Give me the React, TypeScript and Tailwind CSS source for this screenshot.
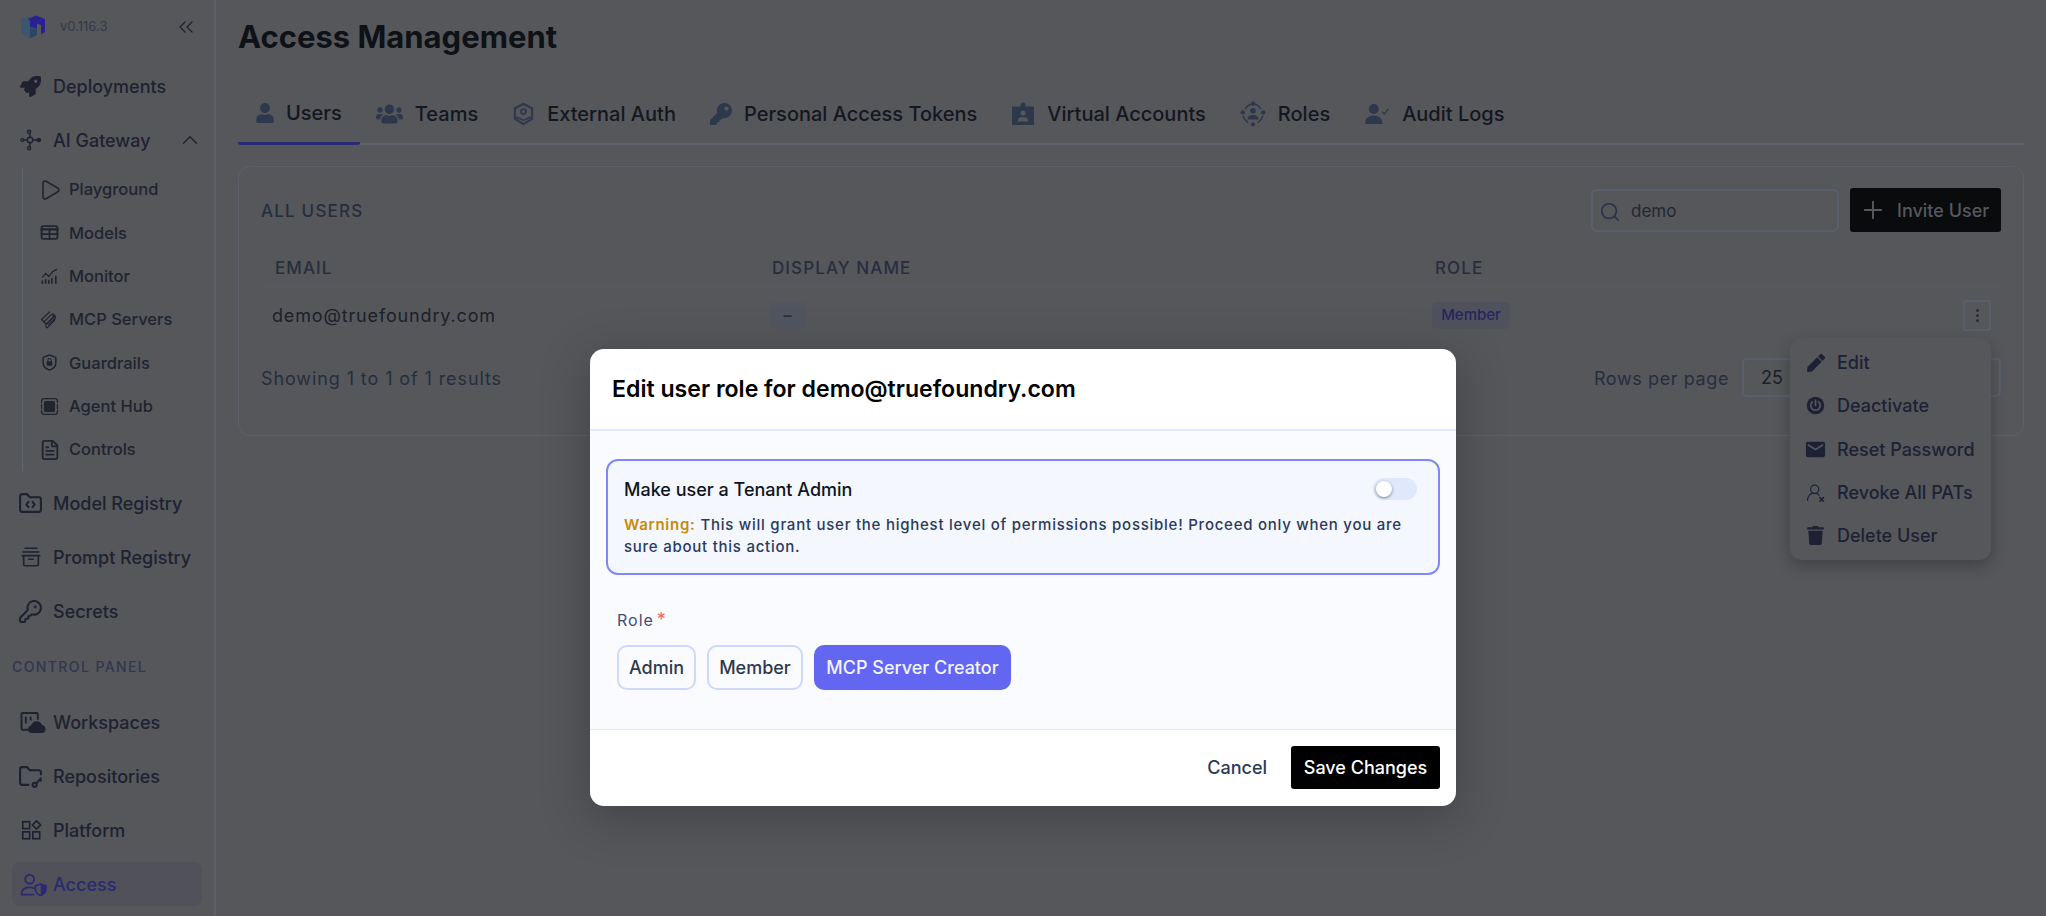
import React from 'react';
import {
  ChevronsLeft,
  ChevronUp,
  Play,
  FileText,
  FolderCode,
  FolderKey,
  KeyRound,
  Search,
  Plus,
} from 'lucide-react';
import { FaRocket, FaUser, FaUsers, FaKey, FaPen, FaTrash } from 'react-icons/fa';
import { MdEmail } from 'react-icons/md';

type IconProps = { className?: string };

const Svg = ({ className, children }: IconProps & { children: React.ReactNode }) => (
  <svg viewBox="0 0 24 24" fill="none" stroke="currentColor" strokeWidth="2" strokeLinecap="round" strokeLinejoin="round" className={className}>
    {children}
  </svg>
);

const Logo = () => (
  <svg viewBox="0 0 24 24" className="w-[24px] h-[24px]">
    <path d="M0 4.500 7 1.500 10 3v18l-1 2.500L0 18z" fill="#3c566f" />
    <path d="M9 12l7 2.500V20l-7 3.500z" fill="#2c4560" />
    <path d="M7 4l8-3.500L24 4v13l-4 2.500V10l-4-1.500V14L9 11.500V6z" fill="#2a2190" />
  </svg>
);

const GatewayIcon = ({ className }: IconProps) => (
  <Svg className={className}>
    <g strokeWidth="1.500">
      <circle cx="11" cy="12" r="3" />
      <circle cx="10" cy="3" r="1.700" />
      <circle cx="10" cy="21" r="1.700" />
      <circle cx="2.500" cy="12" r="1.500" />
      <path d="M4 12h4M14 12h5M10.500 5l.5 4M10.500 19l.5-4" />
    </g>
    <circle cx="20.500" cy="12" r="2.500" fill="currentColor" stroke="none" />
  </Svg>
);

const TableIcon = ({ className }: IconProps) => (
  <Svg className={className}>
    <rect x="2" y="4" width="20" height="16" rx="2" strokeWidth="2.400" />
    <path d="M2 8h20" strokeWidth="3" />
    <path d="M2 14h20M12 8v12" strokeWidth="2.200" />
  </Svg>
);

const MonitorIcon = ({ className }: IconProps) => (
  <Svg className={className}>
    <path d="M3 21v-4M7 21v-6M11 21v-5M15 21v-7M20 21V11" strokeWidth="2" strokeLinecap="butt" />
    <path d="M3 13l4-5 4 4 5-6 5-3" strokeWidth="1.500" />
  </Svg>
);

const McpIcon = ({ className }: IconProps) => (
  <Svg className={className}>
    <g strokeWidth="1.500">
      <path d="M2 12 12 2.500" />
      <path d="M5 15 14.500 5.500a2 2 0 0 1 3 3L8 18" />
      <path d="M8 18l9.500-9.500M11 18.500l8-8a2 2 0 0 0-3-3" />
      <path d="M2 12l6 6M7 20l2 2.500 9-9a2 2 0 0 0 0-3" />
    </g>
  </Svg>
);

const ShieldLockIcon = ({ className }: IconProps) => (
  <Svg className={className}>
    <path d="M12 2.500 4 5.500v7c0 4.500 3.500 7.500 8 9 4.500-1.500 8-4.500 8-9v-7z" strokeWidth="1.800" />
    <rect x="8.500" y="10.500" width="7" height="5.500" rx="1" fill="currentColor" stroke="none" />
    <path d="M10 10.500V9a2 2 0 0 1 4 0v1.500" strokeWidth="1.300" />
  </Svg>
);

const AgentIcon = ({ className }: IconProps) => (
  <Svg className={className}>
    <path d="M2 7V5a3 3 0 0 1 3-3h14a3 3 0 0 1 3 3v2M2 17v2a3 3 0 0 0 3 3h14a3 3 0 0 0 3-3v-2" strokeWidth="1.600" />
    <path d="M2 9.500v5M22 9.500v5" strokeWidth="1.600" />
    <rect x="5" y="5" width="14" height="14" rx="2" fill="currentColor" stroke="none" />
  </Svg>
);

const ArchiveIcon = ({ className }: IconProps) => (
  <Svg className={className}>
    <path d="M5.500 2.500h13M3.500 6.500h17" strokeWidth="1.800" />
    <path d="M2.500 10.500h19M4 10.500V20a1.500 1.500 0 0 0 1.500 1.500h13A1.500 1.500 0 0 0 20 20v-9.500M9.500 14.500h5" strokeWidth="1.800" />
  </Svg>
);

const WorkspaceIcon = ({ className }: IconProps) => (
  <svg viewBox="0 0 28 24" fill="none" className={className}>
    <path d="M11 19.500H2.500a1 1 0 0 1-1-1V3a1 1 0 0 1 1-1h15a1 1 0 0 1 1 1v6" stroke="currentColor" strokeWidth="2" />
    <path d="M6 6v7M11 6v4" stroke="currentColor" strokeWidth="2" />
    <path d="M12 23a4 4 0 0 1-.5-7.900 6 6 0 0 1 11.300-.6A4.300 4.300 0 0 1 23 23z" fill="currentColor" />
  </svg>
);

const PlatformIcon = ({ className }: IconProps) => (
  <Svg className={className}>
    <g strokeWidth="1.800" strokeLinejoin="miter">
      <rect x="3" y="3" width="7.500" height="7.500" />
      <rect x="3" y="14" width="7.500" height="7.500" />
      <rect x="14" y="14" width="7.500" height="7.500" />
      <path d="M18 2l4.500 4.500L18 11l-4.500-4.500z" />
    </g>
  </Svg>
);

const AccessIcon = ({ className }: IconProps) => (
  <svg viewBox="0 0 28 24" fill="none" className={className}>
    <circle cx="10" cy="6.500" r="4.700" stroke="currentColor" strokeWidth="1.900" />
    <path d="M1.500 22.500c0-5 3.500-7.500 8.500-7.500 2 0 3.500.4 5 1.300M1.500 22.500H14" stroke="currentColor" strokeWidth="1.900" strokeLinecap="round" />
    <path d="M21.500 11.500l5.500 2v3.500c0 3-2.500 5.500-5.500 6.500-3-1-5.500-3.500-5.500-6.500v-3.500z" stroke="currentColor" strokeWidth="1.700" />
    <path d="M21.500 11.500l5.500 2v3.500c0 3-2.500 5.500-5.500 6.500z" fill="currentColor" />
  </svg>
);

const HexPinIcon = ({ className }: IconProps) => (
  <Svg className={className}>
    <path d="M12 1.500 21 6v11l-9 5.500L3 17V6z" strokeWidth="2.200" />
    <circle cx="12" cy="9.500" r="2.600" strokeWidth="1.900" />
    <path d="M5 15.500l7 3 7-3" strokeWidth="1.900" />
  </Svg>
);

const BadgeIcon = ({ className }: IconProps) => (
  <svg viewBox="0 0 24 24" className={className}>
    <path fillRule="evenodd" clipRule="evenodd" fill="currentColor" d="M9.500 4.500V3a2.500 2.500 0 0 1 5 0v1.500H23V23H1V4.500zM12 8.500a2.500 2.500 0 1 0 0 5 2.500 2.500 0 0 0 0-5zM7 19.500h10v-1.500c0-2-2-3-5-3s-5 1-5 3z" />
  </svg>
);

const RolesIcon = ({ className }: IconProps) => (
  <Svg className={className}>
    <path d="M5 7a9.500 9.500 0 0 1 5-4M14 3a9.500 9.500 0 0 1 5 4M21 14a9.500 9.500 0 0 1-4 5.500M7 19.500A9.500 9.500 0 0 1 3 14" strokeWidth="1.400" />
    <g fill="currentColor" stroke="none">
      <circle cx="12" cy="2.500" r="2" />
      <circle cx="21.500" cy="10.500" r="2" />
      <circle cx="2.500" cy="10.500" r="2" />
      <circle cx="12" cy="21.500" r="2" />
      <circle cx="12" cy="9" r="2.600" />
      <path d="M7 17c0-3 2-4 5-4s5 1 5 4z" />
    </g>
  </Svg>
);

const UserCheckIcon = ({ className }: IconProps) => (
  <svg viewBox="0 0 28 24" fill="none" className={className}>
    <circle cx="10.500" cy="6.500" r="5.500" fill="currentColor" />
    <path d="M1 23c0-6.500 4-9.500 9.500-9.500S20 16.500 20 23z" fill="currentColor" />
    <path d="M19.500 9.500l2.500 2.500 4.500-5.500" stroke="currentColor" strokeWidth="1.300" />
  </svg>
);

const PowerIcon = ({ className }: IconProps) => (
  <svg viewBox="0 0 24 24" className={className}>
    <circle cx="12" cy="12" r="11" fill="currentColor" />
    <path d="M8 7.500a6 6 0 1 0 8 0M12 5.500v6.500" fill="none" stroke="#54565a" strokeWidth="2.200" strokeLinecap="round" />
  </svg>
);

const UserXIcon = ({ className }: IconProps) => (
  <Svg className={className}>
    <circle cx="11" cy="8" r="5.200" strokeWidth="1.500" />
    <path d="M2 22c0-5 3-8.500 6-9M14 13.500c1 .4 2 1 2.500 2" strokeWidth="1.500" />
    <path d="M17.500 18.500l4.500 4.500M22 18.500 17.500 23" strokeWidth="2" />
  </Svg>
);

const gatewayItems = [
  { label: 'Playground', icon: Play, box: 'w-[24px] h-[24px] stroke-[1.600px]' },
  { label: 'Models', icon: TableIcon, box: 'w-[19px] h-[19px]' },
  { label: 'Monitor', icon: MonitorIcon, box: 'w-[19px] h-[19px]' },
  { label: 'MCP Servers', icon: McpIcon, box: 'w-[19px] h-[19px]' },
  { label: 'Guardrails', icon: ShieldLockIcon, box: 'w-[19px] h-[19px]' },
  { label: 'Agent Hub', icon: AgentIcon, box: 'w-[19px] h-[19px]' },
  { label: 'Controls', icon: FileText, box: 'w-[22px] h-[22px]' },
];

const tabs = [
  { label: 'Users', icon: FaUser, box: 'w-[18px] h-[20px]' },
  { label: 'Teams', icon: FaUsers, box: 'w-[27px] h-[22px]' },
  { label: 'External Auth', icon: HexPinIcon, box: 'w-[23px] h-[26px]' },
  { label: 'Personal Access Tokens', icon: FaKey, box: 'w-[22px] h-[22px]' },
  { label: 'Virtual Accounts', icon: BadgeIcon, box: 'w-[24px] h-[24px]' },
  { label: 'Roles', icon: RolesIcon, box: 'w-[26px] h-[26px]' },
  { label: 'Audit Logs', icon: UserCheckIcon, box: 'w-[26px] h-[22px]' },
];

const menuItems = [
  { label: 'Edit', icon: FaPen, box: 'w-[18px] h-[18px]' },
  { label: 'Deactivate', icon: PowerIcon, box: 'w-[19px] h-[19px]' },
  { label: 'Reset Password', icon: MdEmail, box: 'w-[23px] h-[23px] -mx-[2px]' },
  { label: 'Revoke All PATs', icon: UserXIcon, box: 'w-[19px] h-[19px]' },
  { label: 'Delete User', icon: FaTrash, box: 'w-[17px] h-[19px]' },
];

const lucideNavIcon = 'w-[25px] h-[25px] -ml-[2px] -mr-[1px]';

const NavRow = ({ label, icon: Icon, active, iconClass = 'w-[22px] h-[22px]' }: { label: string; icon: React.ElementType; active?: boolean; iconClass?: string }) => (
  <div className="h-[54px] px-[12px] py-[5px]">
    <div className={`h-[44px] px-[8px] flex items-center rounded-[8px] text-[18px] font-medium ${active ? 'bg-[#505159] text-[#2a2a72]' : 'text-[#1e2230]'}`}>
      <span className="w-[22px] mr-[11px] flex justify-start shrink-0">
        <Icon className={`${iconClass} shrink-0`} />
      </span>
      {label}
    </div>
  </div>
);

const Sidebar = () => (
  <aside className="w-[216px] shrink-0 h-full border-r-2 border-[#5b6069]">
    <div className="h-[54px] pl-[21px] pr-[16px] flex items-center">
      <Logo />
      <span className="ml-[15px] text-[13px] text-[#343a48]">v0.116.3</span>
      <ChevronsLeft className="ml-auto w-[24px] h-[24px] text-[#20242f]" strokeWidth={1.400} />
    </div>
    <div className="mt-[5px]">
      <NavRow label="Deployments" icon={FaRocket} iconClass="w-[21px] h-[21px]" />
    </div>
    <div className="relative">
      <NavRow label="AI Gateway" icon={GatewayIcon} />
      <ChevronUp className="absolute right-[11px] top-[14px] w-[26px] h-[26px] text-[#20242f]" strokeWidth={1.300} />
    </div>
    <div className="mt-[1px] ml-[22px] mr-[16px] border-l border-[#5f6670] pl-[17px]">
      {gatewayItems.map(({ label, icon: Icon, box }) => (
        <div key={label} className="h-[43.330px] flex items-center text-[16.500px] font-medium text-[#20242f]">
          <span className="w-[19px] mr-[10px] flex justify-center shrink-0">
            <Icon className={`${box} shrink-0`} />
          </span>
          {label}
        </div>
      ))}
    </div>
    <div className="mt-[5px]">
      <NavRow label="Model Registry" icon={FolderCode} iconClass={lucideNavIcon} />
    </div>
    <NavRow label="Prompt Registry" icon={ArchiveIcon} />
    <NavRow label="Secrets" icon={KeyRound} iconClass={lucideNavIcon} />
    <div className="h-[57px] pl-[12px] pt-[20px] text-[14px] leading-[18px] font-medium tracking-[1.400px] text-[#2f384e]">CONTROL PANEL</div>
    <NavRow label="Workspaces" icon={WorkspaceIcon} iconClass="w-[27px] h-[23px] -mr-[5px]" />
    <NavRow label="Repositories" icon={FolderKey} iconClass={lucideNavIcon} />
    <NavRow label="Platform" icon={PlatformIcon} />
    <NavRow label="Access" icon={AccessIcon} active iconClass="w-[27px] h-[23px] -mr-[5px]" />
  </aside>
);

const Tabs = () => (
  <div className="flex h-[63px] border-b-2 border-[#5b6069]">
    {tabs.map(({ label, icon: Icon, box }, i) => (
      <div key={label} className={`relative flex items-center gap-[12px] px-[18px] pt-[2px] -mr-[2px] text-[20px] font-medium text-[#14171f] ${i === 0 ? 'border-b-[3px] border-[#2a2a72] -mb-[2px] rounded-b-[2px]' : ''}`}>
        <Icon className={`${box} text-[#2e384d]`} />
        {label}
      </div>
    ))}
  </div>
);

const UsersCard = () => (
  <section className="relative mt-[21px] h-[270px] rounded-[12px] border border-[#5b6069] px-[22px] pt-[21px]">
    <div className="flex items-center h-[44px]">
      <h2 className="pt-[4px] text-[17px] font-medium tracking-[1.200px] text-[#262e3e]">ALL USERS</h2>
      <div className="ml-auto w-[248px] h-[43px] rounded-[6px] border-2 border-[#59606c] flex items-center pl-[6px] pt-[3px] text-[17px] text-[#232832]">
        <Search className="w-[22px] h-[22px] mr-[10px] text-[#2a344a]" strokeWidth={1.900} />
        demo
      </div>
      <button className="ml-[11px] w-[151px] h-[44px] rounded-[3px] bg-[#0a0b0d] flex items-center pl-[9px] text-[18px] font-medium text-[#55585f]">
        <Plus className="w-[28px] h-[28px] mr-[10px] text-[#55585f]" strokeWidth={1.700} />
        Invite User
      </button>
    </div>
    <div className="grid grid-cols-[497px_663px_1fr] mt-[15px] h-[40px] pt-[4px] items-center border-b border-[#585a5f] text-[17px] font-medium tracking-[1.100px] text-[#262e3e]">
      <div className="pl-[14px]">EMAIL</div>
      <div className="pl-[14px]">DISPLAY NAME</div>
      <div className="pl-[14px]">ROLE</div>
    </div>
    <div className="grid grid-cols-[497px_663px_1fr] h-[56px] items-center">
      <div className="pl-[11px] text-[18px] tracking-[0.850px] text-[#1c2029]">demo@truefoundry.com</div>
      <div className="pl-[12px]">
        <span className="inline-flex w-[35px] h-[27px] items-center justify-center rounded-[5px] bg-[#50555f] text-[#262e3e] font-semibold">–</span>
      </div>
      <div className="pl-[11px] flex items-center justify-between pr-[10px]">
        <span className="inline-flex h-[27px] w-[78px] pt-[1px] items-center justify-center rounded-[5px] bg-[#4f525c] text-[15px] font-medium text-[#27265f]">Member</span>
        <button className="w-[28px] h-[31px] rounded-[3px] border-2 border-[#59606c] flex flex-col items-center justify-center gap-[2px]">
          <span className="w-[3px] h-[3px] rounded-full bg-[#262e3e]" />
          <span className="w-[3px] h-[3px] rounded-full bg-[#262e3e]" />
          <span className="w-[3px] h-[3px] rounded-full bg-[#262e3e]" />
        </button>
      </div>
    </div>
    <div className="flex items-center justify-between mt-[15px] h-[39px]">
      <span className="pt-[2px] text-[18px] tracking-[0.900px] text-[#262e3e]">Showing 1 to 1 of 1 results</span>
      <div className="flex items-center gap-[13px]">
        <span className="pt-[2px] text-[18px] tracking-[0.600px] text-[#262e3e]">Rows per page</span>
        <div className="w-[259px] h-[39px] rounded-[5px] border-2 border-[#59606c] flex items-center pl-[17px] text-[18px] text-[#1c2029]">25</div>
      </div>
    </div>
    <div className="absolute right-[32px] top-[171px] w-[201px] h-[222px] rounded-[12px] bg-[#55575b] py-[3px] shadow-[0_6px_16px_rgba(0,0,0,0.25)]">
      {menuItems.map(({ label, icon: Icon, box }) => (
        <div key={label} className="h-[43.330px] pl-[16px] flex items-center text-[18px] font-medium text-[#1c2233]">
          <span className="w-[19px] mr-[12px] flex justify-center shrink-0">
            <Icon className={box} />
          </span>
          {label}
        </div>
      ))}
    </div>
  </section>
);

const RoleModal = () => (
  <div className="absolute inset-0 flex justify-center pt-[349px]">
    <div className="w-[866px] h-[457px] rounded-[14px] bg-white overflow-hidden shadow-[0_10px_50px_rgba(0,0,0,0.25)] flex flex-col">
      <header className="h-[82px] shrink-0 pl-[22px] flex items-center border-b-2 border-[#e2e9fc]">
        <h1 className="text-[23.100px] font-semibold text-black">Edit user role for demo@truefoundry.com</h1>
      </header>
      <div className="h-[299px] shrink-0 bg-[#fafbff] border-b border-[#e2e9fc] px-[16px] pt-[28px]">
        <div className="h-[116px] rounded-[12px] border-2 border-[#8188f5] bg-[#f4f7fe] px-[16px] pt-[13px]">
          <div className="flex items-center justify-between h-[30px]">
            <span className="text-[18px] font-medium text-[#0f1420]">Make user a Tenant Admin</span>
            <span className="mr-[5px] w-[44px] h-[22px] rounded-full bg-[#dfe9fb] flex items-center pl-[3px]">
              <span className="w-[16px] h-[16px] rounded-full bg-white shadow-[0_1px_3px_rgba(0,0,0,0.45)]" />
            </span>
          </div>
          <p className="mt-[10px] text-[15px] leading-[22px] tracking-[0.750px] font-medium text-[#2a3a5c]">
            <span className="font-semibold text-[#c98a08]">Warning:</span> This will grant user the highest level of permissions possible! Proceed only when you are sure about this action.
          </p>
        </div>
        <div className="mt-[33px] pl-[11px] text-[16px] leading-[24px] tracking-[1px] text-[#3d4f75]">
          Role<span className="ml-[3px] text-[18px] text-[#f56565]">*</span>
        </div>
        <div className="flex gap-[11px] mt-[13px] pl-[11px]">
          <button className="w-[79px] h-[45px] rounded-[10px] border-2 border-[#cdd9fb] text-[18px] font-medium text-[#2d3a4d]">Admin</button>
          <button className="w-[96px] h-[45px] rounded-[10px] border-2 border-[#cdd9fb] text-[18px] font-medium text-[#2d3a4d]">Member</button>
          <button className="w-[197px] h-[45px] rounded-[10px] bg-[#6366f1] text-[18px] font-medium text-[#f2f4ff]">MCP Server Creator</button>
        </div>
      </div>
      <footer className="flex-1 flex items-center justify-end pr-[16px] pb-[2px]">
        <button className="mr-[24px] text-[18px] font-medium text-[#2a3a5c]">Cancel</button>
        <button className="w-[149px] h-[43px] rounded-[3px] bg-black text-[18px] font-medium text-white">Save Changes</button>
      </footer>
    </div>
  </div>
);

export default function App() {
  return (
    <div className="relative flex h-[916px] w-[2046px] overflow-hidden bg-[#55575b] font-['Inter',sans-serif]">
      <Sidebar />
      <main className="flex-1 px-[22px]">
        <div className="h-[82px] flex items-center pb-[8px]">
          <h1 className="text-[31px] font-bold text-[#0e1116]">Access Management</h1>
        </div>
        <Tabs />
        <UsersCard />
      </main>
      <RoleModal />
    </div>
  );
}
